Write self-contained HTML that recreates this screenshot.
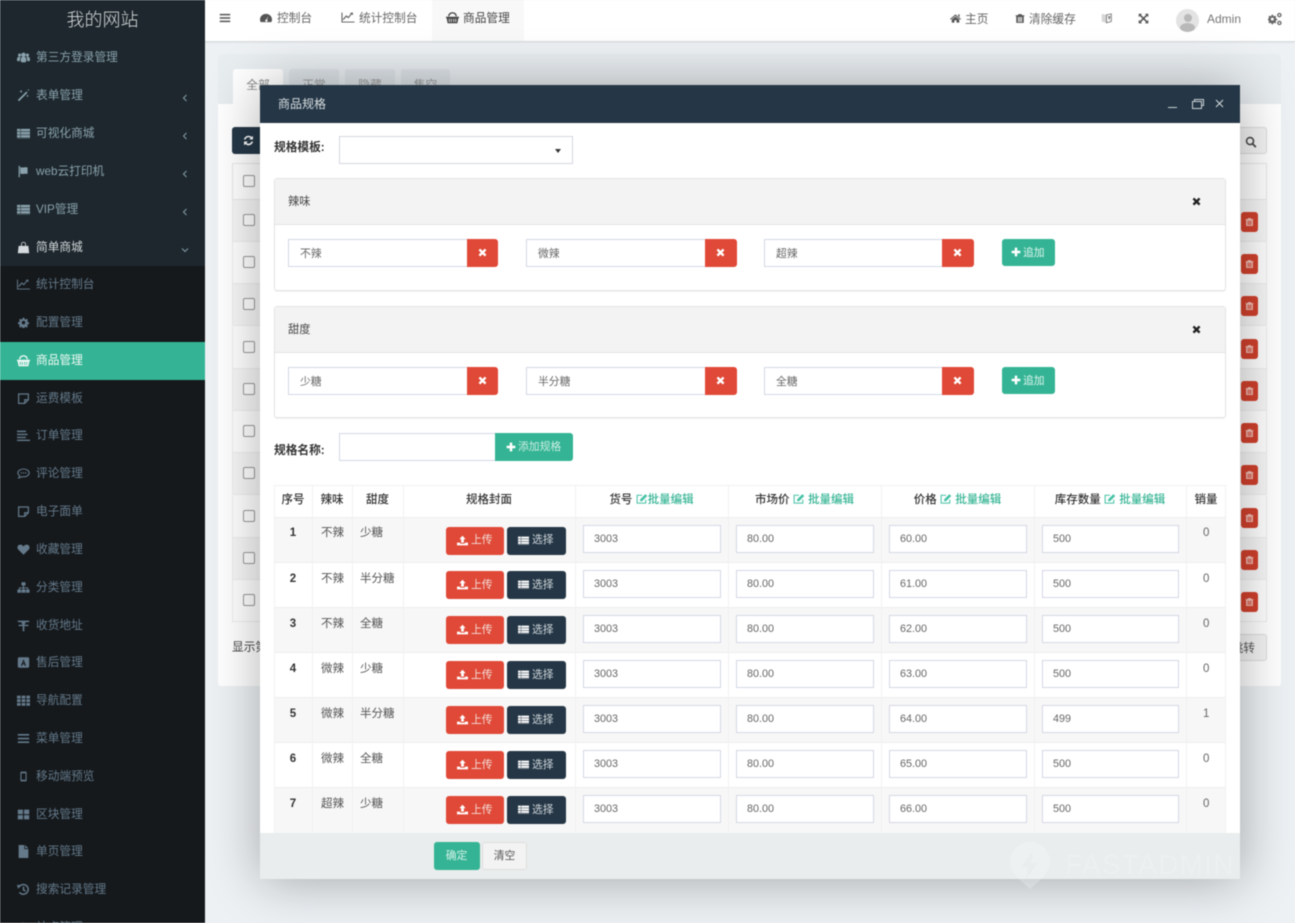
<!DOCTYPE html>
<html lang="zh"><head><meta charset="utf-8"><title>商品管理</title>
<style>
html,body{margin:0;padding:0;width:1295px;height:923px;overflow:hidden;background:#edf1f4}
*{box-sizing:border-box}
body{position:relative;font:11.7px/1 "Liberation Sans","Noto Sans CJK SC",sans-serif;color:#555;filter:blur(.45px)}
div,span,svg{position:absolute}
svg{fill:currentColor;overflow:visible}
.in{position:static;display:inline-block;vertical-align:-2px}
.side{left:0;top:0;width:205px;height:923px;background:#1d272d;overflow:hidden}
.sub{left:0;top:266px;width:205px;height:657px;background:#15191c}
.m{left:0;width:205px;height:38px;line-height:40px;color:#8ba2ad;white-space:nowrap}
.m span{left:36px;top:0}
.m svg{left:17px;top:13px;width:13px;height:13px}
.m.s{color:#64798a}
.m .ar{left:181px;top:18px;width:8px;height:8px;fill:none;stroke:#8299a4;stroke-width:1.1}
.h{top:0;height:41px;line-height:38px;white-space:nowrap;color:#666}
.h.p{line-height:39px}
.ck{left:243px;width:12px;height:12px;border:1px solid #999;border-radius:2px;background:#fff}
.br{left:232px;width:1035px;height:42.2px;border:1px solid #eee;border-top:0}
.del{left:1241px;width:17px;height:20px;background:#d2412d;border-radius:3px;color:#f4c4bc}
.del svg{left:4px;top:5px;width:9px;height:10px}
.modal{left:260px;top:85px;width:980px;height:794px;background:#fff;box-shadow:1px 1px 50px rgba(0,0,0,.32);overflow:hidden}
.mh{left:0;top:0;width:980px;height:38px;background:#253746;color:#d9dee2;line-height:38px;font-size:12px;padding-left:18px}
.lab{font-weight:700;color:#333;white-space:nowrap}
.box{border:1px solid #d5d8e4;background:#fff;color:#666;line-height:26px;padding-left:10px;white-space:nowrap;font-size:10.8px}
.pan{left:14px;width:952px;border:1px solid #e3e3e3;border-radius:3px;box-shadow:0 1px 1px rgba(0,0,0,.05)}
.pan .box{line-height:28px;padding-left:11px}
.ph{left:0;top:0;width:950px;height:46px;background:#f3f3f3;border-bottom:1px solid #e3e3e3;line-height:46px;padding-left:13px;color:#444;font-size:11.2px}
.x{width:32px;height:28px;background:#e04937;color:#fff;border-radius:0 3px 3px 0}
.x svg{left:11px;top:9px;width:9px;height:9px}
.add{left:727px;width:53px;height:27px;background:#34b494;color:#dff4ee;border-radius:3px;line-height:28px;white-space:nowrap;font-size:10.8px}
.add svg{left:9px;top:8px;width:10px;height:10px;color:#fff}
.add span{left:21px;top:0}
.t{left:14px;top:400px;width:952px;height:348px;overflow:hidden;font-size:11.5px}
.th{top:0;height:31px;line-height:30px;text-align:center;font-weight:500;color:#333;white-space:nowrap}
.th b{font-weight:500;color:#34b494}
.th svg.in{color:#46c2a6}
.r{left:0;width:952px;border-top:1px solid #eee}
.g{background:#f7f7f7}
.v{top:0;width:1px;height:348px;background:#f1f1f1}
.r .n,.r .a,.r .b,.r .z{top:8px;height:16px;line-height:16px;white-space:nowrap}
.r .n{left:14px;width:10px;font-weight:700;color:#333;font-family:"Liberation Sans",sans-serif;text-align:center}
.r .a{left:47px;color:#555}
.r .b{left:86px;color:#555}
.r .z{left:929px;color:#666}
.r.f .n,.r.f .a,.r.f .b,.r.f .z{top:7px}
.up,.se{top:8px;height:28px;border-radius:3px;line-height:28px;color:#f3e0dc;white-space:nowrap;font-size:10.8px}
.r.f .up,.r.f .se{top:9px;line-height:27px}
.up{left:172px;width:58px;background:#e04937}
.se{left:233px;width:59px;background:#253746;color:#cfd6db}
.up svg,.se svg{left:11px;top:8px;width:11px;height:11px;color:#fff}
.up span,.se span{left:25px;top:0}
.i1,.i2,.i3,.i4{top:7px;height:28px}
.i1{left:309px;width:138px}.i2{left:462px;width:138px}.i3{left:615px;width:138px}.i4{left:768px;width:137px}
.ft{left:0;top:748px;width:980px;height:46px;background:#eaeded}
.sb{top:9px;height:28px;border-radius:3px;line-height:28px;text-align:center;font-size:10.8px}
</style></head><body>
<svg width="0" height="0" style="left:0;top:0"><defs>
<symbol id="users" viewBox="0 0 16 16"><circle cx="3.2" cy="5" r="1.9"/><circle cx="12.8" cy="5" r="1.9"/><circle cx="8" cy="4.7" r="2.7"/><path d="M0 11c0-3 1-3.800 2.200-3.800h2.300C3.800 8.500 3.500 10 3.500 12.500H1C.4 12.500 0 12 0 11zM16 11c0-3-1-3.800-2.200-3.800h-2.300c.7 1.300 1 2.800 1 5.300H15c.6 0 1-.5 1-1.500zM4.500 11.500c0-3 1-4.300 2-4.300h3c1 0 2 1.300 2 4.300 0 1.800-1 2.500-2 2.500h-3c-1 0-2-.7-2-2.500z"/></symbol>
<symbol id="magic" viewBox="0 0 16 16"><path d="M1 13.500L11.500 3l1.500 1.500L2.500 15zM5 1l.6 1.400L7 3l-1.400.6L5 5l-.6-1.400L3 3l1.400-.6zM13 7l.5 1 1 .5-1 .5-.5 1-.5-1-1-.5 1-.5zM14 0l.4.9.9.4-.9.4-.4.9-.4-.9-.9-.4.9-.4z"/></symbol>
<symbol id="list" viewBox="0 0 16 16"><path d="M0 2h16v12.500H0z" opacity=".35"/><path d="M0 2.500h4v2.600H0zM5 2.500h11v2.600H5zM0 6.300h4v2.600H0zM5 6.300h11v2.600H5zM0 10.100h4v2.600H0zM5 10.100h11v2.600H5z"/></symbol>
<symbol id="flag" viewBox="0 0 16 16"><path d="M2 1h1.500v14H2zM4 2.500c3 1.500 5-.5 9 .5v8c-4-1-6 1-9-.5z"/></symbol>
<symbol id="bag" viewBox="0 0 16 16"><path d="M2 6h12l1 9H1zM5 6V4a3 3 0 0 1 6 0v2h-1V4a2 2 0 0 0-4 0v2z"/></symbol>
<symbol id="chart" viewBox="0 0 16 16"><path d="M0 2h1.200v11H16v1.200H0z"/><path d="M2.500 11l3.500-4 2.500 2 4-5 1.500 1.200V1.800L10.300 2.500l1.300.8-3.300 4-2.500-2-4.300 4.800z"/></symbol>
<symbol id="cog" viewBox="0 0 16 16"><path fill-rule="evenodd" d="M6.700 1h2.600l.4 2 1.300.6 1.700-1.100 1.800 1.800-1.100 1.700.6 1.300 2 .4v2.600l-2 .4-.6 1.300 1.100 1.700-1.800 1.800-1.700-1.100-1.300.6-.4 2H6.700l-.4-2-1.300-.6-1.700 1.100-1.800-1.800 1.100-1.700-.6-1.300-2-.4V7.700l2-.4.600-1.300-1.100-1.700 1.800-1.800L5 3.600l1.300-.6zM8 5.700a2.500 2.500 0 1 0 0 5 2.500 2.500 0 0 0 0-5z"/></symbol>
<symbol id="basket" viewBox="0 0 16 16"><path fill-rule="evenodd" d="M0 7h16v1.700h-.8L14 15H2L.8 8.700H0zM3.500 9.500v4h1v-4zM6 9.500v4h1v-4zM9 9.500v4h1v-4zM11.500 9.500v4h1v-4z"/><path d="M2.500 6.500C3 3 5 1.500 8 1.500s5 1.500 5.500 5h-1.600C11.500 4.200 10 3 8 3S4.500 4.200 4.100 6.500z"/></symbol>
<symbol id="note" viewBox="0 0 16 16"><path fill="none" stroke="currentColor" stroke-width="1.500" d="M2 2.500h12v7l-4.500 4.500H2zM14 9.500H9.500V14"/></symbol>
<symbol id="order" viewBox="0 0 16 16"><path d="M0 2h11v1.800H0zM0 5.800h13v1.800H0zM0 9.500h11v1.800H0zM0 13h16v1.800H0z"/></symbol>
<symbol id="cmt" viewBox="0 0 16 16"><path fill="none" stroke="currentColor" stroke-width="1.300" d="M8 2.500c4 0 7 2.200 7 4.800s-3 4.800-7 4.800c-.7 0-1.300 0-2-.2-1 .8-2.500 1.400-4 1.500.7-.7 1.200-1.500 1.300-2.500C2 10 1 8.700 1 7.300 1 4.700 4 2.500 8 2.500z"/><path d="M4.500 6.500h1.500V8H4.500zM7.300 6.500h1.500V8H7.300zM10 6.500h1.500V8H10z"/></symbol>
<symbol id="heart" viewBox="0 0 16 16"><path d="M8 14.500L1.500 8C-.5 5.800.8 2 4 2c1.800 0 3 1 4 2.300C9 3 10.200 2 12 2c3.200 0 4.500 3.800 2.500 6z"/></symbol>
<symbol id="map" viewBox="0 0 16 16"><path d="M5.500 1.500h5v4h-1.800v2.300h5V10.500H15.500v4h-4.500v-4h1.500V9H8.700v1.500h1.800v4h-5v-4h1.800V9H3.500v1.500H5v4H.5v-4h1.800V7.800h5V5.500H5.500z"/></symbol>
<symbol id="jpy" viewBox="0 0 16 16"><path d="M1 2h14v1.800H1zM2 7h12v1.800H9v6.200H7V8.800H2zM5 4l2 3h2l2-3z"/></symbol>
<symbol id="amz" viewBox="0 0 16 16"><path fill-rule="evenodd" d="M3 1.500h10a2 2 0 0 1 2 2v9a2 2 0 0 1-2 2H3a2 2 0 0 1-2-2v-9a2 2 0 0 1 2-2zM8 4L4.800 12h1.700l.6-1.800h1.800l.6 1.800h1.700zM8 6.800l.6 2H7.400z"/></symbol>
<symbol id="th" viewBox="0 0 16 16"><path d="M0 2h4.500v3.500H0zM5.700 2h4.600v3.500H5.700zM11.500 2H16v3.500h-4.500zM0 6.500h4.500V10H0zM5.700 6.500h4.600V10H5.700zM11.500 6.500H16V10h-4.500zM0 11h4.500v3.500H0zM5.700 11h4.600v3.500H5.700zM11.500 11H16v3.500h-4.500z"/></symbol>
<symbol id="bars" viewBox="0 0 16 16"><path d="M1 2.500h14v2H1zM1 7h14v2H1zM1 11.500h14v2H1z"/></symbol>
<symbol id="mob" viewBox="0 0 16 16"><path fill-rule="evenodd" d="M5.500 2h5c.8 0 1.300.5 1.300 1.300v9.400c0 .8-.5 1.300-1.300 1.300h-5c-.8 0-1.300-.5-1.300-1.300V3.300C4.200 2.500 4.700 2 5.500 2zM5.500 4v8h5V4z"/></symbol>
<symbol id="large" viewBox="0 0 16 16"><path d="M1 2h6.300v5.500H1zM8.700 2H15v5.500H8.700zM1 8.700h6.300V14H1zM8.700 8.700H15V14H8.700z"/></symbol>
<symbol id="file" viewBox="0 0 16 16"><path d="M2 0h7v5h5v11H2zM10 0l4 4h-4z"/></symbol>
<symbol id="hist" viewBox="0 0 16 16"><path fill="none" stroke="currentColor" stroke-width="1.800" d="M2.800 4.500A6 6 0 1 1 3 11.500M8 4.500V8.500l2.500 1.500"/><path d="M0 2l5 1-3.800 4z"/></symbol>
<symbol id="dash" viewBox="0 0 16 16"><path fill-rule="evenodd" d="M8 2.500c4.400 0 8 3.300 8 7.500 0 1.300-.3 2.400-1 3.500H1c-.7-1.100-1-2.200-1-3.500 0-4.200 3.600-7.500 8-7.500zM7 11.500a1.500 1.500 0 1 0 2.500-1L11 5.500 8.500 10H8a1.500 1.500 0 0 0-1 1.500z"/></symbol>
<symbol id="home" viewBox="0 0 16 16"><path d="M8 2l8 6.800-.9 1L8 4 .9 9.800 0 8.800zM12 2h2v4l-2-1.700zM2.500 9.500L8 5l5.500 4.500V14H9.500v-3.500h-3V14h-4z"/></symbol>
<symbol id="trash" viewBox="0 0 16 16"><path fill-rule="evenodd" d="M5.500 1h5l1 1.800H15v1.500h-1V15H2V4.300H1V2.800h3.500zM4.800 5.500v8h1.400v-8zM7.300 5.500v8h1.400v-8zM9.800 5.500v8h1.400v-8z"/></symbol>
<symbol id="lang" viewBox="0 0 16 16"><path d="M1 2l7 1.500V15l-7-2z" opacity=".3"/><path d="M8 3.500l7-1.500v11l-7 2z" fill="none" stroke="currentColor" stroke-width="1.300"/><path d="M10 5.500h4l-2 6z"/></symbol>
<symbol id="exp" viewBox="0 0 16 16"><path d="M1 1h5L4.300 2.700l3.700 3.700 3.700-3.700L10 1h5v5l-1.700-1.700L9.600 8l3.700 3.700L15 10v5h-5l1.700-1.700L8 9.600l-3.700 3.700L6 15H1v-5l1.700 1.700L6.400 8 2.700 4.300 1 6z"/></symbol>
<symbol id="cogs" viewBox="0 0 16 16"><g transform="translate(-.5 2.500) scale(.68)"><path fill-rule="evenodd" d="M6.700 1h2.600l.4 2 1.300.6 1.700-1.100 1.800 1.800-1.100 1.700.6 1.300 2 .4v2.600l-2 .4-.6 1.300 1.100 1.700-1.800 1.800-1.700-1.100-1.300.6-.4 2H6.700l-.4-2-1.300-.6-1.700 1.100-1.800-1.800 1.100-1.700-.6-1.300-2-.4V7.700l2-.4.600-1.300-1.100-1.700 1.800-1.800L5 3.600l1.300-.6zM8 5.700a2.500 2.500 0 1 0 0 5 2.500 2.500 0 0 0 0-5z"/></g><circle cx="13" cy="3.500" r="1.800" fill="none" stroke="currentColor" stroke-width="1.500"/><circle cx="13" cy="12.500" r="1.800" fill="none" stroke="currentColor" stroke-width="1.500"/></symbol>
<symbol id="search" viewBox="0 0 16 16"><path fill-rule="evenodd" d="M6.700 1a5.700 5.700 0 0 1 4.600 9l4 4-1.600 1.600-4-4A5.700 5.700 0 1 1 6.700 1zm0 2a3.700 3.700 0 1 0 0 7.400 3.700 3.700 0 0 0 0-7.400z"/></symbol>
<symbol id="sync" viewBox="0 0 16 16"><path d="M14.500 1v5.500H9l2-2C10.200 3.800 9.200 3.300 8 3.300c-2 0-3.700 1.300-4.300 3.200H1.300C2 3.300 4.700 1 8 1c1.900 0 3.500.8 4.700 1.900zM1.500 15V9.500H7l-2 2c.8.700 1.800 1.200 3 1.200 2 0 3.700-1.300 4.300-3.200h2.400C14 12.700 11.300 15 8 15c-1.900 0-3.500-.8-4.700-1.900z"/></symbol>
<symbol id="plus" viewBox="0 0 16 16"><path d="M6 1h4v5h5v4h-5v5H6v-5H1V6h5z"/></symbol>
<symbol id="times" viewBox="0 0 16 16"><path d="M4 1l4 4 4-4 3 3-4 4 4 4-3 3-4-4-4 4-3-3 4-4-4-4z"/></symbol>
<symbol id="upl" viewBox="0 0 16 16"><path d="M8 1l4.500 5H10v5H6V6H3.500zM0 11h4.500v1.500h7V11H16v4H0z"/></symbol>
<symbol id="edit" viewBox="0 0 16 16"><path fill="none" stroke="currentColor" stroke-width="1.400" d="M13 9v4.500H1.500V3H8"/><path d="M5.500 8.500L12.500 1.500l2.500 2.500-7 7H5.500z"/></symbol>
</defs></svg>

<div class="side">
<div style="left:0;top:0;width:205px;height:41px;line-height:40px;text-align:center;font-size:18px;color:#d8dcde;font-weight:300">我的网站</div>
<div class="sub"></div>
<div style="left:0;top:342px;width:205px;height:38px;background:#34b494"></div>
<div class="m" style="top:38px"><svg><use href="#users"/></svg><span>第三方登录管理</span></div>
<div class="m" style="top:76px"><svg><use href="#magic"/></svg><span>表单管理</span><svg class="ar" viewBox="0 0 8 8"><path d="M5.500 1L2.500 4l3 3"/></svg></div>
<div class="m" style="top:114px"><svg><use href="#list"/></svg><span>可视化商城</span><svg class="ar" viewBox="0 0 8 8"><path d="M5.500 1L2.500 4l3 3"/></svg></div>
<div class="m" style="top:152px"><svg><use href="#flag"/></svg><span>web云打印机</span><svg class="ar" viewBox="0 0 8 8"><path d="M5.500 1L2.500 4l3 3"/></svg></div>
<div class="m" style="top:190px"><svg><use href="#list"/></svg><span>VIP管理</span><svg class="ar" viewBox="0 0 8 8"><path d="M5.500 1L2.500 4l3 3"/></svg></div>
<div class="m" style="top:228px;color:#d5dbde"><svg><use href="#bag"/></svg><span>简单商城</span><svg class="ar" viewBox="0 0 8 8"><path d="M1 2.500l3 3 3-3"/></svg></div>
<div class="m s" style="top:265px"><svg><use href="#chart"/></svg><span>统计控制台</span></div>
<div class="m s" style="top:303px"><svg style="left:18px;top:14px;width:11px;height:11px"><use href="#cog"/></svg><span>配置管理</span></div>
<div class="m" style="top:341px;color:#f2faf8"><svg><use href="#basket"/></svg><span>商品管理</span></div>
<div class="m s" style="top:379px"><svg><use href="#note"/></svg><span>运费模板</span></div>
<div class="m s" style="top:416px"><svg><use href="#order"/></svg><span>订单管理</span></div>
<div class="m s" style="top:454px"><svg><use href="#cmt"/></svg><span>评论管理</span></div>
<div class="m s" style="top:492px"><svg><use href="#note"/></svg><span>电子面单</span></div>
<div class="m s" style="top:530px"><svg><use href="#heart"/></svg><span>收藏管理</span></div>
<div class="m s" style="top:568px"><svg><use href="#map"/></svg><span>分类管理</span></div>
<div class="m s" style="top:606px"><svg><use href="#jpy"/></svg><span>收货地址</span></div>
<div class="m s" style="top:643px"><svg><use href="#amz"/></svg><span>售后管理</span></div>
<div class="m s" style="top:681px"><svg><use href="#th"/></svg><span>导航配置</span></div>
<div class="m s" style="top:719px"><svg><use href="#bars"/></svg><span>菜单管理</span></div>
<div class="m s" style="top:757px"><svg><use href="#mob"/></svg><span>移动端预览</span></div>
<div class="m s" style="top:795px"><svg><use href="#large"/></svg><span>区块管理</span></div>
<div class="m s" style="top:832px"><svg><use href="#file"/></svg><span>单页管理</span></div>
<div class="m s" style="top:870px"><svg><use href="#hist"/></svg><span>搜索记录管理</span></div>
<div class="m s" style="top:908px"><svg style="left:18px;top:14px;width:11px;height:11px"><use href="#cog"/></svg><span>站点管理</span></div>
</div>

<div style="left:205px;top:0;width:1090px;height:42px;background:#fff;border-bottom:1px solid #d9dcdf;box-shadow:0 1px 1px rgba(0,0,0,.05)"></div>
<div style="left:432px;top:0;width:92px;height:41px;background:#f8f8f8"></div>
<svg style="left:219px;top:12px;width:12px;height:12px;color:#555"><use href="#bars"/></svg>
<svg style="left:260px;top:12px;width:12px;height:12px"><use href="#dash"/></svg><div class="h" style="left:277px">控制台</div>
<svg style="left:341px;top:11px;width:14px;height:13px"><use href="#chart"/></svg><div class="h" style="left:359px">统计控制台</div>
<svg style="left:446px;top:11px;width:13px;height:13px;color:#444"><use href="#basket"/></svg><div class="h" style="left:463px;color:#444">商品管理</div>
<svg style="left:950px;top:13px;width:11px;height:11px"><use href="#home"/></svg><div class="h p" style="left:965px">主页</div>
<svg style="left:1015px;top:13px;width:10px;height:11px"><use href="#trash"/></svg><div class="h p" style="left:1029px">清除缓存</div>
<svg style="left:1101px;top:12px;width:11px;height:12px;color:#777"><use href="#lang"/></svg>
<svg style="left:1138px;top:13px;width:11px;height:11px;color:#555"><use href="#exp"/></svg>
<div style="left:1176px;top:9px;width:23px;height:23px;border-radius:50%;background:#e3e3e3;overflow:hidden"><div style="left:7.500px;top:5px;width:8px;height:8px;border-radius:50%;background:#b9b9b9"></div><div style="left:4px;top:14px;width:15px;height:9px;border-radius:50%;background:#b9b9b9"></div></div>
<div class="h" style="left:1207px;color:#777;line-height:39px;font-size:12px">Admin</div>
<svg style="left:1268px;top:12px;width:14px;height:14px;color:#666"><use href="#cogs"/></svg>

<div style="left:218px;top:54px;width:1063px;height:632px;background:#fff;border-radius:3px"></div>
<div style="left:218px;top:54px;width:1063px;height:50px;background:#e8edf0;border-radius:3px 3px 0 0"></div>
<div style="left:233px;top:69px;width:50px;height:35px;background:#fff;border-radius:3px 3px 0 0;text-align:center;line-height:33px;color:#888">全部</div>
<div style="left:289px;top:69px;width:50px;height:35px;background:#dde3e7;border-radius:3px 3px 0 0;text-align:center;line-height:33px;color:#999">正常</div>
<div style="left:345px;top:69px;width:50px;height:35px;background:#dde3e7;border-radius:3px 3px 0 0;text-align:center;line-height:33px;color:#999">隐藏</div>
<div style="left:401px;top:69px;width:49px;height:35px;background:#dde3e7;border-radius:3px 3px 0 0;text-align:center;line-height:33px;color:#999">售空</div>
<div style="left:232px;top:127px;width:40px;height:27px;background:#253746;border-radius:3px;color:#fff"><svg style="left:11px;top:8px;width:11px;height:11px"><use href="#sync"/></svg></div>
<div style="left:1230px;top:127px;width:37px;height:27px;background:#f4f4f4;border:1px solid #ddd;border-radius:3px;color:#444"><svg style="left:14px;top:8px;width:12px;height:12px"><use href="#search"/></svg></div>
<div style="left:232px;top:163px;width:1035px;height:37px;border:1px solid #e8e8e8;background:#fff"></div>
<div class="ck" style="top:175px"></div>
<div class="br" style="top:200px;background:#f7f7f7"></div><div class="ck" style="top:214px"></div><div class="del" style="top:212px"><svg><use href="#trash"/></svg></div>
<div class="br" style="top:242px;background:#fff"></div><div class="ck" style="top:256px"></div><div class="del" style="top:254px"><svg><use href="#trash"/></svg></div>
<div class="br" style="top:284px;background:#f7f7f7"></div><div class="ck" style="top:298px"></div><div class="del" style="top:296px"><svg><use href="#trash"/></svg></div>
<div class="br" style="top:327px;background:#fff"></div><div class="ck" style="top:341px"></div><div class="del" style="top:339px"><svg><use href="#trash"/></svg></div>
<div class="br" style="top:369px;background:#f7f7f7"></div><div class="ck" style="top:383px"></div><div class="del" style="top:381px"><svg><use href="#trash"/></svg></div>
<div class="br" style="top:411px;background:#fff"></div><div class="ck" style="top:425px"></div><div class="del" style="top:423px"><svg><use href="#trash"/></svg></div>
<div class="br" style="top:453px;background:#f7f7f7"></div><div class="ck" style="top:467px"></div><div class="del" style="top:465px"><svg><use href="#trash"/></svg></div>
<div class="br" style="top:496px;background:#fff"></div><div class="ck" style="top:510px"></div><div class="del" style="top:508px"><svg><use href="#trash"/></svg></div>
<div class="br" style="top:538px;background:#f7f7f7"></div><div class="ck" style="top:552px"></div><div class="del" style="top:550px"><svg><use href="#trash"/></svg></div>
<div class="br" style="top:580px;background:#fff"></div><div class="ck" style="top:594px"></div><div class="del" style="top:592px"><svg><use href="#trash"/></svg></div>
<div style="left:232px;top:642px;white-space:nowrap;color:#444">显示第 1 到第 10 条记录</div>
<div style="left:1200px;top:634px;width:67px;height:27px;background:#f4f4f4;border:1px solid #ddd;border-radius:3px;line-height:27px;text-align:right;padding-right:11px;color:#555">跳转</div>

<div class="modal">
<div class="mh">商品规格</div>
<div style="left:908px;top:22px;width:9px;height:1px;background:#c9d0d5"></div>
<div style="left:934px;top:14px;width:10px;height:7px;border:1px solid #c9d0d5"></div>
<div style="left:932px;top:16px;width:10px;height:8px;border:1px solid #c9d0d5;background:#253746"></div>
<svg style="left:955px;top:14px;width:9px;height:9px;fill:none;stroke:#d5dadd;stroke-width:1" viewBox="0 0 9 9"><path d="M1 1l7 7M8 1L1 8"/></svg>
<div class="lab" style="left:14px;top:57px">规格模板:</div>
<div style="left:79px;top:51px;width:234px;height:28px;background:#fff;border:1px solid #d5d8e0"></div>
<div style="left:295px;top:64px;border:3.500px solid transparent;border-top:4px solid #333;border-bottom:0"></div>

<div class="pan" style="top:93px;height:113px"><div class="ph">辣味</div>
<svg style="left:917px;top:18px;width:9px;height:9px;color:#222"><use href="#times"/></svg>
<div class="box" style="left:13px;top:60px;width:180px;height:28px">不辣</div><div class="x" style="left:192px;top:60px;width:31px"><svg><use href="#times"/></svg></div>
<div class="box" style="left:251px;top:60px;width:180px;height:28px">微辣</div><div class="x" style="left:430px;top:60px"><svg><use href="#times"/></svg></div>
<div class="box" style="left:489px;top:60px;width:179px;height:28px">超辣</div><div class="x" style="left:667px;top:60px"><svg><use href="#times"/></svg></div>
<div class="add" style="top:60px"><svg><use href="#plus"/></svg><span>追加</span></div>
</div>

<div class="pan" style="top:221px;height:112px"><div class="ph">甜度</div>
<svg style="left:917px;top:18px;width:9px;height:9px;color:#222"><use href="#times"/></svg>
<div class="box" style="left:13px;top:60px;width:180px;height:28px">少糖</div><div class="x" style="left:192px;top:60px;width:31px"><svg><use href="#times"/></svg></div>
<div class="box" style="left:251px;top:60px;width:180px;height:28px">半分糖</div><div class="x" style="left:430px;top:60px"><svg><use href="#times"/></svg></div>
<div class="box" style="left:489px;top:60px;width:179px;height:28px">全糖</div><div class="x" style="left:667px;top:60px"><svg><use href="#times"/></svg></div>
<div class="add" style="top:60px"><svg><use href="#plus"/></svg><span>追加</span></div>
</div>

<div class="lab" style="left:14px;top:360px">规格名称:</div>
<div class="box" style="left:79px;top:348px;width:157px;height:28px"></div>
<div style="left:235px;top:348px;width:78px;height:28px;background:#34b494;border-radius:0 3px 3px 0;color:#cdeee5;line-height:29px;white-space:nowrap;font-size:10.8px"><svg style="left:11px;top:9px;width:10px;height:10px;color:#fff"><use href="#plus"/></svg><span style="left:23px;top:0">添加规格</span></div>

<div class="t">
<div class="th" style="left:0;width:38px">序号</div>
<div class="th" style="left:38px;width:40px">辣味</div>
<div class="th" style="left:78px;width:51px">甜度</div>
<div class="th" style="left:129px;width:172px">规格封面</div>
<div class="th" style="left:301px;width:153px">货号 <svg class="in" width="12" height="12"><use href="#edit"/></svg><b>批量编辑</b></div>
<div class="th" style="left:454px;width:153px">市场价 <svg class="in" width="12" height="12"><use href="#edit"/></svg> <b>批量编辑</b></div>
<div class="th" style="left:607px;width:153px">价格 <svg class="in" width="12" height="12"><use href="#edit"/></svg> <b>批量编辑</b></div>
<div class="th" style="left:760px;width:152px">库存数量 <svg class="in" width="12" height="12"><use href="#edit"/></svg> <b>批量编辑</b></div>
<div class="th" style="left:912px;width:40px">销量</div>
<div style="left:0;top:0;width:952px;height:1px;background:#f1f1f1"></div>

<div class="r g f" style="top:31.500px;height:46px"><div class="n">1</div><div class="a">不辣</div><div class="b">少糖</div><div class="up"><svg><use href="#upl"/></svg><span>上传</span></div><div class="se"><svg><use href="#list"/></svg><span>选择</span></div><div class="box i1">3003</div><div class="box i2">80.00</div><div class="box i3">60.00</div><div class="box i4">500</div><div class="z">0</div></div>
<div class="r" style="top:77px;height:45px"><div class="n">2</div><div class="a">不辣</div><div class="b">半分糖</div><div class="up"><svg><use href="#upl"/></svg><span>上传</span></div><div class="se"><svg><use href="#list"/></svg><span>选择</span></div><div class="box i1">3003</div><div class="box i2">80.00</div><div class="box i3">61.00</div><div class="box i4">500</div><div class="z">0</div></div>
<div class="r g" style="top:122px;height:45px"><div class="n">3</div><div class="a">不辣</div><div class="b">全糖</div><div class="up"><svg><use href="#upl"/></svg><span>上传</span></div><div class="se"><svg><use href="#list"/></svg><span>选择</span></div><div class="box i1">3003</div><div class="box i2">80.00</div><div class="box i3">62.00</div><div class="box i4">500</div><div class="z">0</div></div>
<div class="r" style="top:167px;height:45px"><div class="n">4</div><div class="a">微辣</div><div class="b">少糖</div><div class="up"><svg><use href="#upl"/></svg><span>上传</span></div><div class="se"><svg><use href="#list"/></svg><span>选择</span></div><div class="box i1">3003</div><div class="box i2">80.00</div><div class="box i3">63.00</div><div class="box i4">500</div><div class="z">0</div></div>
<div class="r g" style="top:212px;height:45px"><div class="n">5</div><div class="a">微辣</div><div class="b">半分糖</div><div class="up"><svg><use href="#upl"/></svg><span>上传</span></div><div class="se"><svg><use href="#list"/></svg><span>选择</span></div><div class="box i1">3003</div><div class="box i2">80.00</div><div class="box i3">64.00</div><div class="box i4">499</div><div class="z">1</div></div>
<div class="r" style="top:257px;height:45px"><div class="n">6</div><div class="a">微辣</div><div class="b">全糖</div><div class="up"><svg><use href="#upl"/></svg><span>上传</span></div><div class="se"><svg><use href="#list"/></svg><span>选择</span></div><div class="box i1">3003</div><div class="box i2">80.00</div><div class="box i3">65.00</div><div class="box i4">500</div><div class="z">0</div></div>
<div class="r g" style="top:302px;height:46px"><div class="n">7</div><div class="a">超辣</div><div class="b">少糖</div><div class="up"><svg><use href="#upl"/></svg><span>上传</span></div><div class="se"><svg><use href="#list"/></svg><span>选择</span></div><div class="box i1">3003</div><div class="box i2">80.00</div><div class="box i3">66.00</div><div class="box i4">500</div><div class="z">0</div></div>

<div class="v" style="left:0"></div><div class="v" style="left:38px"></div><div class="v" style="left:78px"></div><div class="v" style="left:129px"></div><div class="v" style="left:301px"></div><div class="v" style="left:454px"></div><div class="v" style="left:607px"></div><div class="v" style="left:760px"></div><div class="v" style="left:912px"></div><div class="v" style="left:951px"></div>
</div>

<div class="ft">
<div class="sb" style="left:173.500px;width:46px;background:#34b494;color:#d8f2eb">确定</div>
<div class="sb" style="left:222px;width:45px;background:#f3f3f3;border:1px solid #ddd;color:#555;line-height:26px">清空</div>
</div>
</div>

<svg style="left:1010px;top:842px;width:40px;height:47px;color:rgba(255,255,255,.22)" viewBox="0 0 40 47"><path fill-rule="evenodd" d="M20 0c11 0 20 8.500 20 19.500C40 31 28 40 20 47 12 40 0 31 0 19.500 0 8.500 9 0 20 0zM23 9L11 25h7l-2 12 12-16h-7z"/></svg>
<div style="left:1065px;top:850px;font-size:28px;line-height:30px;letter-spacing:1.300px;color:rgba(255,255,255,.16);white-space:nowrap">FASTADMIN</div>
</body></html>
